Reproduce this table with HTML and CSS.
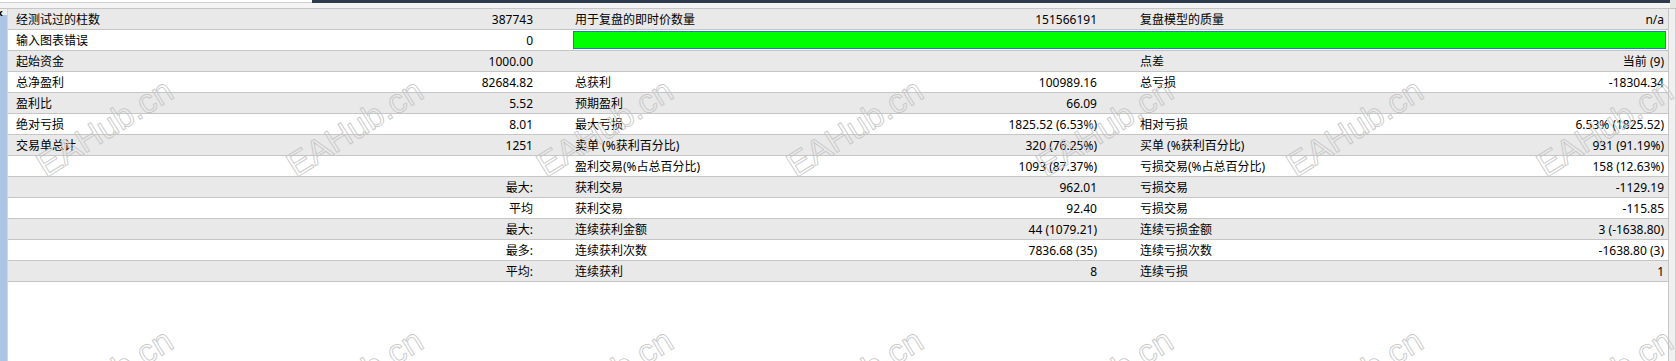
FILE: index.html
```html
<!DOCTYPE html>
<html lang="zh-CN">
<head>
<meta charset="utf-8">
<title>Report</title>
<link rel="stylesheet" href="styles.css">
</head>
<body>
<div class="top">
  <div class="top-a"></div>
  <div class="top-b"></div>
  <div class="top-c"></div>
</div>
<div class="main">
  <div class="side-l"><span class="close">x</span></div>
  <div class="content">
    <div class="row"><div class="c l1">经测试过的柱数</div><div class="c v">387743</div><div class="c l2">用于复盘的即时价数量</div><div class="c v">151566191</div><div class="c l3">复盘模型的质量</div><div class="c v">n/a</div></div>
    <div class="row"><div class="c l1">输入图表错误</div><div class="c v">0</div><div class="bar"></div></div>
    <div class="row"><div class="c l1">起始资金</div><div class="c v">1000.00</div><div class="c l2"></div><div class="c v"></div><div class="c l3">点差</div><div class="c v">当前 (9)</div></div>
    <div class="row"><div class="c l1">总净盈利</div><div class="c v">82684.82</div><div class="c l2">总获利</div><div class="c v">100989.16</div><div class="c l3">总亏损</div><div class="c v">-18304.34</div></div>
    <div class="row"><div class="c l1">盈利比</div><div class="c v">5.52</div><div class="c l2">预期盈利</div><div class="c v">66.09</div><div class="c l3"></div><div class="c v"></div></div>
    <div class="row"><div class="c l1">绝对亏损</div><div class="c v">8.01</div><div class="c l2">最大亏损</div><div class="c v">1825.52 (6.53%)</div><div class="c l3">相对亏损</div><div class="c v">6.53% (1825.52)</div></div>
    <div class="row"><div class="c l1">交易单总计</div><div class="c v">1251</div><div class="c l2">卖单 (%获利百分比)</div><div class="c v">320 (76.25%)</div><div class="c l3">买单 (%获利百分比)</div><div class="c v">931 (91.19%)</div></div>
    <div class="row"><div class="c l1"></div><div class="c v"></div><div class="c l2">盈利交易(%占总百分比)</div><div class="c v">1093 (87.37%)</div><div class="c l3">亏损交易(%占总百分比)</div><div class="c v">158 (12.63%)</div></div>
    <div class="row"><div class="c l1"></div><div class="c v">最大:</div><div class="c l2">获利交易</div><div class="c v">962.01</div><div class="c l3">亏损交易</div><div class="c v">-1129.19</div></div>
    <div class="row"><div class="c l1"></div><div class="c v">平均</div><div class="c l2">获利交易</div><div class="c v">92.40</div><div class="c l3">亏损交易</div><div class="c v">-115.85</div></div>
    <div class="row"><div class="c l1"></div><div class="c v">最大:</div><div class="c l2">连续获利金额</div><div class="c v">44 (1079.21)</div><div class="c l3">连续亏损金额</div><div class="c v">3 (-1638.80)</div></div>
    <div class="row"><div class="c l1"></div><div class="c v">最多:</div><div class="c l2">连续获利次数</div><div class="c v">7836.68 (35)</div><div class="c l3">连续亏损次数</div><div class="c v">-1638.80 (3)</div></div>
    <div class="row"><div class="c l1"></div><div class="c v">平均:</div><div class="c l2">连续获利</div><div class="c v">8</div><div class="c l3">连续亏损</div><div class="c v">1</div></div>
  </div>
  <div class="side-r"></div>
</div>
<svg class="wm-layer" width="1676" height="361" viewBox="0 0 1676 361" aria-hidden="true">
  <g class="wm">
    <text x="46" y="178" transform="rotate(-32 46 178)">EAHub.cn</text>
    <text x="296" y="178" transform="rotate(-32 296 178)">EAHub.cn</text>
    <text x="546" y="178" transform="rotate(-32 546 178)">EAHub.cn</text>
    <text x="796" y="178" transform="rotate(-32 796 178)">EAHub.cn</text>
    <text x="1046" y="178" transform="rotate(-32 1046 178)">EAHub.cn</text>
    <text x="1296" y="178" transform="rotate(-32 1296 178)">EAHub.cn</text>
    <text x="1546" y="178" transform="rotate(-32 1546 178)">EAHub.cn</text>
    <text x="46" y="428" transform="rotate(-32 46 428)">EAHub.cn</text>
    <text x="296" y="428" transform="rotate(-32 296 428)">EAHub.cn</text>
    <text x="546" y="428" transform="rotate(-32 546 428)">EAHub.cn</text>
    <text x="796" y="428" transform="rotate(-32 796 428)">EAHub.cn</text>
    <text x="1046" y="428" transform="rotate(-32 1046 428)">EAHub.cn</text>
    <text x="1296" y="428" transform="rotate(-32 1296 428)">EAHub.cn</text>
    <text x="1546" y="428" transform="rotate(-32 1546 428)">EAHub.cn</text>
  </g>
</svg>
</body>
</html>
```

FILE: styles.css
```css
html, body {
  margin: 0;
  padding: 0;
}
body {
  width: 1676px;
  height: 361px;
  overflow: hidden;
  position: relative;
  background: #ffffff;
  font-family: "Noto Sans", "Noto Sans CJK SC", sans-serif;
  font-size: 12px;
  color: #000;
}
.top {
  height: 8px;
  display: flex;
  align-items: flex-start;
  background: #f4f4f4;
}
.top-a {
  width: 312px;
  height: 3px;
  box-sizing: border-box;
  background: #ffffff;
  border-bottom: 1px solid #d0d0d0;
}
.top-b {
  width: 1358px;
  height: 3px;
  background: #2d3b4c;
}
.top-c {
  flex: 1;
  height: 8px;
  background: #e6e6e6;
}
.main {
  display: flex;
  height: 353px;
  box-sizing: border-box;
  border-top: 1px solid #c6c6c6;
}
.side-l {
  width: 7px;
  background: linear-gradient(#f2f2f2 0, #f2f2f2 6px, #abc5e2 6px);
  overflow: hidden;
}
.close {
  display: block;
  margin-left: -3px;
  font-family: "DejaVu Sans", sans-serif;
  font-size: 9px;
  font-weight: bold;
  line-height: 10px;
  margin-top: -1px;
}
.content {
  flex: 1;
  border-left: 1px solid #d6d6d6;
  border-right: 1px solid #c6c6c6;
  background: #ffffff;
}
.side-r {
  width: 6px;
  background: #f0f0f0;
  border-right: 1px solid #d0d0d0;
}
.row {
  display: grid;
  grid-template-columns: 272px 257px 280px 284px 280px 287px;
  height: 21px;
  box-sizing: border-box;
  border-bottom: 1px solid #c6c6c6;
  background: #ffffff;
}
.row:nth-child(odd) {
  background: #e9e9e9;
}
.c {
  height: 20px;
  box-sizing: border-box;
  padding-top: 1px;
  line-height: 20px;
  white-space: nowrap;
}
.l1 { padding-left: 8px; }
.l2 { padding-left: 38px; }
.l3 { padding-left: 39px; }
.v {
  text-align: right;
  padding-right: 4px;
}
.bar {
  grid-column: 3 / 7;
  margin: 1px 2px 0 36px;
  height: 18px;
  box-sizing: border-box;
  background: #00ff00;
  border: 1px solid #2a74c9;
}
.wm-layer {
  position: absolute;
  left: 0;
  top: 0;
  pointer-events: none;
}
.wm text {
  font-family: "Liberation Sans", sans-serif;
  font-size: 34px;
  fill: none;
  stroke: #c4c4c4;
  stroke-width: 0.8;
}
```
